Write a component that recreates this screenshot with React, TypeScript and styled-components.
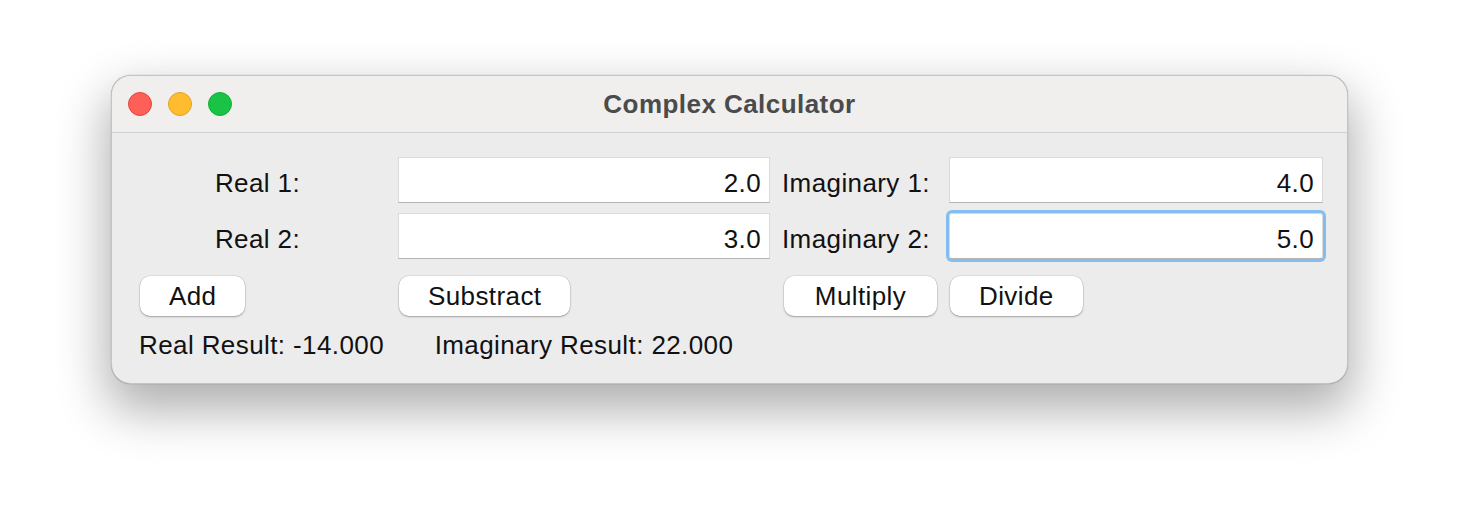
import React from "react";
import styled, { createGlobalStyle } from "styled-components";

const Global = createGlobalStyle`
  html, body { margin: 0; padding: 0; background: #ffffff; }
  body { font-family: "Liberation Sans", Arial, sans-serif; }
  * { box-sizing: border-box; }
`;

const Page = styled.div`
  width: 1460px;
  height: 532px;
  padding: 75px 0 0 111px;
  background: #ffffff;
`;

const Window = styled.div`
  width: 1237px;
  height: 309px;
  border-radius: 20px;
  border: 1px solid #c4c4c4;
  background: #ececec;
  overflow: hidden;
  box-shadow: 0 22px 50px 4px rgba(0, 0, 0, 0.32), 0 0 1px rgba(0, 0, 0, 0.4);
  display: flex;
  flex-direction: column;
`;

const TitleBar = styled.div`
  position: relative;
  height: 57px;
  flex: none;
  background: #f0efed;
  border-bottom: 1px solid #d0cfcd;
  display: flex;
  align-items: center;
  justify-content: center;
`;

const Lights = styled.div`
  position: absolute;
  left: 16px;
  top: 16px;
  display: flex;
  gap: 16px;
`;

const Light = styled.span<{ $fill: string; $edge: string }>`
  width: 24px;
  height: 24px;
  border-radius: 50%;
  background: ${(p) => p.$fill};
  border: 1px solid ${(p) => p.$edge};
`;

const Title = styled.div`
  font-weight: 700;
  font-size: 26px;
  color: #4b4b4b;
  letter-spacing: 0.45px;
  margin-top: 0px;
`;

const Content = styled.div`
  flex: 1;
  padding: 24px 24px 0 27px;
  display: grid;
  grid-template-columns: 247px 372px 155px 374px;
  grid-template-rows: 46px 46px 40px 30px;
  column-gap: 12px;
  row-gap: 10px;
  align-items: center;
  font-size: 26px;
  color: #111111;
`;

const Label = styled.div<{ $align: "center" | "start"; $nudge?: number }>`
  justify-self: ${(p) => p.$align};
  white-space: nowrap;
  letter-spacing: 0.4px;
  margin-top: 6px;
  padding-right: ${(p) => p.$nudge ?? 0}px;
`;

const Field = styled.input<{ $focused?: boolean }>`
  height: 46px;
  width: 100%;
  border: 1px solid #dadada;
  border-bottom-color: #b4b4b4;
  background: #ffffff;
  text-align: right;
  padding: 6px 8px 0 8px;
  font-family: "Liberation Sans", Arial, sans-serif;
  font-size: 26px;
  color: #111111;
  outline: none;
  border-radius: ${(p) => (p.$focused ? "3px" : "0")};
  box-shadow: ${(p) => (p.$focused ? "0 0 0 3px #84bdef" : "none")};
  letter-spacing: 0.4px;
`;

const ButtonRow = styled.div`
  display: contents;
`;

const Btn = styled.button<{ $fill?: boolean }>`
  justify-self: ${(p) => (p.$fill ? "stretch" : "start")};
  height: 40px;
  margin-left: ${(p) => (p.$fill ? "2px" : "1px")};
  padding: 0 29px;
  border: none;
  border-radius: 10px;
  background: #ffffff;
  box-shadow: 0 1px 2px rgba(0, 0, 0, 0.28), 0 0 0 0.5px rgba(0, 0, 0, 0.12);
  font-family: "Liberation Sans", Arial, sans-serif;
  font-size: 26px;
  color: #111111;
  letter-spacing: 0.4px;
  margin-top: 14px;
`;

const Result = styled.div<{ $align: "center" | "start" }>`
  justify-self: ${(p) => p.$align};
  white-space: nowrap;
  letter-spacing: 0.4px;
  margin-top: 22px;
`;

export default function App() {
  return (
    <>
      <Global />
      <Page>
        <Window>
          <TitleBar>
            <Lights>
              <Light $fill="#fe5f57" $edge="#e2463f" />
              <Light $fill="#febc2e" $edge="#e1a325" />
              <Light $fill="#19c345" $edge="#14ae3a" />
            </Lights>
            <Title>Complex Calculator</Title>
          </TitleBar>
          <Content>
            <Label $align="center" $nudge={10}>Real 1:</Label>
            <Field defaultValue="2.0" />
            <Label $align="start">Imaginary 1:</Label>
            <Field defaultValue="4.0" />

            <Label $align="center" $nudge={10}>Real 2:</Label>
            <Field defaultValue="3.0" />
            <Label $align="start">Imaginary 2:</Label>
            <Field defaultValue="5.0" $focused />

            <ButtonRow>
              <Btn>Add</Btn>
              <Btn>Substract</Btn>
              <Btn $fill>Multiply</Btn>
              <Btn>Divide</Btn>
            </ButtonRow>

            <Result $align="start">Real Result: -14.000</Result>
            <Result $align="center">Imaginary Result: 22.000</Result>
          </Content>
        </Window>
      </Page>
    </>
  );
}
